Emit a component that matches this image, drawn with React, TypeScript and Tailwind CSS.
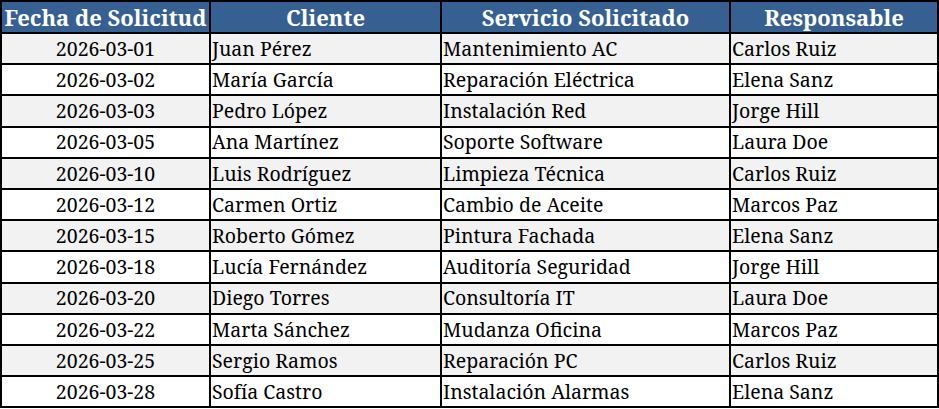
const rows = [
  ['2026-03-01', 'Juan Pérez', 'Mantenimiento AC', 'Carlos Ruiz'],
  ['2026-03-02', 'María García', 'Reparación Eléctrica', 'Elena Sanz'],
  ['2026-03-03', 'Pedro López', 'Instalación Red', 'Jorge Hill'],
  ['2026-03-05', 'Ana Martínez', 'Soporte Software', 'Laura Doe'],
  ['2026-03-10', 'Luis Rodríguez', 'Limpieza Técnica', 'Carlos Ruiz'],
  ['2026-03-12', 'Carmen Ortiz', 'Cambio de Aceite', 'Marcos Paz'],
  ['2026-03-15', 'Roberto Gómez', 'Pintura Fachada', 'Elena Sanz'],
  ['2026-03-18', 'Lucía Fernández', 'Auditoría Seguridad', 'Jorge Hill'],
  ['2026-03-20', 'Diego Torres', 'Consultoría IT', 'Laura Doe'],
  ['2026-03-22', 'Marta Sánchez', 'Mudanza Oficina', 'Marcos Paz'],
  ['2026-03-25', 'Sergio Ramos', 'Reparación PC', 'Carlos Ruiz'],
  ['2026-03-28', 'Sofía Castro', 'Instalación Alarmas', 'Elena Sanz'],
]

const headers = ['Fecha de Solicitud', 'Cliente', 'Servicio Solicitado', 'Responsable']

export default function App() {
  return (
    <div className="bg-white h-[409px] overflow-hidden font-['Noto_Serif','DejaVu_Serif',serif]">
      <table className="table-fixed border-collapse w-[937px]">
        <colgroup>
          <col className="w-[209px]" />
          <col className="w-[231px]" />
          <col className="w-[289px]" />
          <col className="w-[208px]" />
        </colgroup>
        <thead>
          <tr className="h-[32px]">
            {headers.map((h) => (
              <th
                key={h}
                className="border-2 border-black bg-[#366092] text-white font-bold text-[22px] leading-none text-center px-0 whitespace-nowrap"
              >
                {h}
              </th>
            ))}
          </tr>
        </thead>
        <tbody>
          {rows.map((r, i) => (
            <tr key={r[0]} className={`h-[31.2px] ${i % 2 === 0 ? 'bg-[#f2f2f2]' : 'bg-white'}`}>
              <td className="border-2 border-black text-center text-[19.5px] leading-none text-black whitespace-nowrap">{r[0]}</td>
              <td className="border-2 border-black text-left px-px text-[19.5px] leading-none text-black whitespace-nowrap">{r[1]}</td>
              <td className="border-2 border-black text-left px-px text-[19.5px] leading-none text-black whitespace-nowrap">{r[2]}</td>
              <td className="border-2 border-black text-left px-px text-[19.5px] leading-none text-black whitespace-nowrap">{r[3]}</td>
            </tr>
          ))}
        </tbody>
      </table>
    </div>
  )
}
